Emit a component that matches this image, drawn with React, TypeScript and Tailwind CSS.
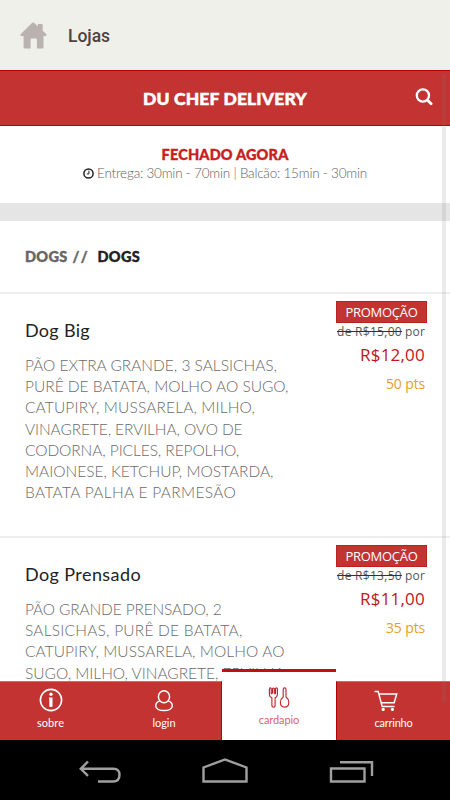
import { useLayoutEffect, useRef, useState } from "react";

/* One line of text, tracked so that it fills the given width. */
function Line({ text, width, className = "" }: { text: string; width: number; className?: string }) {
  const ref = useRef<HTMLSpanElement>(null);
  const [spacing, setSpacing] = useState(0);
  useLayoutEffect(() => {
    const el = ref.current;
    if (!el) return;
    el.style.letterSpacing = "0px";
    const natural = el.getBoundingClientRect().width;
    const next = (width - natural) / text.length;
    el.style.letterSpacing = next + "px";
    setSpacing(next);
  }, [text, width]);
  return (
    <span ref={ref} className={"inline-block whitespace-pre " + className} style={{ letterSpacing: spacing + "px" }}>
      {text}
    </span>
  );
}

type Row = [string, number];

const items: { name: Row; lines: Row[]; old: string; price: string; points: string }[] = [
  {
    name: ["Dog Big", 65],
    lines: [
      ["PÃO EXTRA GRANDE, 3 SALSICHAS,", 252],
      ["PURÊ DE BATATA, MOLHO AO SUGO,", 263.5],
      ["CATUPIRY, MUSSARELA, MILHO,", 230],
      ["VINAGRETE, ERVILHA, OVO DE", 217.5],
      ["CODORNA, PICLES, REPOLHO,", 214],
      ["MAIONESE, KETCHUP, MOSTARDA,", 248.5],
      ["BATATA PALHA E PARMESÃO", 211],
    ],
    old: "de R$15,00",
    price: "R$12,00",
    points: "50 pts",
  },
  {
    name: ["Dog Prensado", 116],
    lines: [
      ["PÃO GRANDE PRENSADO, 2", 196.5],
      ["SALSICHAS, PURÊ DE BATATA,", 217.5],
      ["CATUPIRY, MUSSARELA, MOLHO AO", 259.5],
      ["SUGO, MILHO, VINAGRETE, ERVILHA,", 263],
    ],
    old: "de R$13,50",
    price: "R$11,00",
    points: "35 pts",
  },
];

function Item({ item }: { item: (typeof items)[number] }) {
  return (
    <article className="flex h-[244px] shrink-0 justify-between border-t-2 border-[#eeeeee] pl-[25px] pr-[23px]">
      <div className="pt-[24px]">
        <h3 className="h-[24px] text-[18px] leading-[24px] text-[#222]">
          <Line text={item.name[0]} width={item.name[1]} />
        </h3>
        <div className="mt-[13px] text-[15.5px] font-light leading-[21.2px] text-[#6a6a6a]">
          {item.lines.map(([text, width]) => (
            <div key={text} className="h-[21.2px]">
              <Line text={text} width={width} />
            </div>
          ))}
        </div>
      </div>
      <div className="flex flex-col items-end pt-[7px] font-['Open_Sans',sans-serif]">
        <div className="flex h-[22px] w-[91px] items-center justify-center border border-[#be2020] bg-[#c33332] text-[13px] leading-[20px] text-white">
          <Line text="PROMOÇÃO" width={72} />
        </div>
        <div className="flex h-[17px] gap-[3px] pr-[2px] text-[12px] leading-[17px] text-[#555]">
          <Line text={item.old} width={65} className="line-through decoration-[#333]" />
          <Line text="por" width={20} />
        </div>
        <div className="mt-[3px] h-[24px] pr-[2px] text-[17px] leading-[24px] text-[#bd1720]">
          <Line text={item.price} width={65} />
        </div>
        <div className="mt-[8px] h-[18px] pr-[2px] text-[14px] leading-[18px] text-[#e5a02b]">
          <Line text={item.points} width={39} />
        </div>
      </div>
    </article>
  );
}

function HomeIcon() {
  return (
    <svg className="h-[27px] w-[27px] text-[#b9b2b0]" viewBox="0 0 27 27" fill="currentColor">
      <path d="M12 .9q1.1-1 2.2 0l3.6 3.3V2.8q0-.9.9-.9h3.1q.9 0 .9.9v5.9l3.5 3.3q1.1 1.6-.8 1.9h-1.9v11.3q0 1.3-1.3 1.3h-5.3v-8.8q0-1.1-1.1-1.1h-4.1q-1.1 0-1.1 1.1v8.8H4.9q-1.3 0-1.3-1.3V13.9H1.5q-2-.4-.7-2z" />
    </svg>
  );
}

function SearchIcon() {
  return (
    <svg className="h-[18px] w-[18px]" viewBox="0 0 18 18" fill="none" stroke="currentColor">
      <circle cx="7.9" cy="7.5" r="6.1" strokeWidth="2.3" />
      <path d="m12.4 12 3.7 3.7" strokeWidth="2.8" strokeLinecap="round" />
    </svg>
  );
}

function ClockIcon() {
  return (
    <svg className="h-[11px] w-[11px] text-[#222]" viewBox="0 0 11 11" fill="none" stroke="currentColor">
      <circle cx="5.5" cy="5.5" r="4.6" strokeWidth="1.5" />
      <path d="M5.9 2.7v3.2H3.7" strokeWidth="1" />
    </svg>
  );
}

function InfoIcon() {
  return (
    <svg className="h-[24px] w-[24px]" viewBox="0 0 24 24" fill="none" stroke="currentColor">
      <circle cx="12" cy="12" r="10.6" strokeWidth="1.6" />
      <circle cx="12" cy="6.3" r="1.7" fill="currentColor" stroke="none" />
      <path d="M10 9.5h3.5v8.8q0 .8-1.6.8t-1.6-.8v-7.6H10z" fill="currentColor" stroke="none" />
    </svg>
  );
}

function UserIcon() {
  return (
    <svg className="h-[24px] w-[24px]" viewBox="0 0 24 24" fill="none" stroke="currentColor" strokeWidth="1.5">
      <ellipse cx="12" cy="7.8" rx="5.6" ry="6" />
      <path d="M7.7 11.9c-2.4 1-4 2.700-4 4.800 0 3.200 3.800 4.900 8.300 4.900s8.300-1.700 8.300-4.900c0-2.100-1.600-3.800-4-4.800" />
    </svg>
  );
}

function CutleryIcon() {
  return (
    <svg className="h-[22px] w-[22px]" viewBox="0 0 22 22" fill="none" stroke="#c4272b" strokeWidth="1.15" strokeLinejoin="round">
      <path d="M1.4 1.5q1.1-1.2 1.800 0v5.100h1.100M4.500 6.600V1.500q.9-1 1.800 0v5.100M6.300 6.600h1.200V1.500q1-1.200 1.900 0v5.900q0 2.300-2.300 3.400v7.700q0 1.700-1.600 1.700t-1.600-1.700v-7.700Q1.400 9.700 1.400 7.400V1.500" />
      <path d="M15.200 10V2.500q0-1.600 1.400-1.600T18 2.500V10q2.800 2 2.800 5.200 0 4.900-4.200 4.900t-4.200-4.900q0-3.200 2.800-5.200z" />
    </svg>
  );
}

function CartIcon() {
  return (
    <svg className="h-[22px] w-[24px]" viewBox="0 0 24 22" fill="none" stroke="currentColor" strokeWidth="1.5">
      <path d="M.6 1.600h3.600l4 15h12.300M5 4h17.700l-2.500 8.700H7.200" />
      <circle cx="9.200" cy="19.400" r="1.600" fill="currentColor" stroke="none" />
      <circle cx="18.400" cy="19.400" r="1.600" fill="currentColor" stroke="none" />
    </svg>
  );
}

export default function App() {
  return (
    <div className="relative flex h-[800px] w-[450px] flex-col overflow-hidden bg-white font-[Lato,sans-serif]">
      <header className="flex h-[70px] shrink-0 items-center gap-[21px] bg-[#eff0ea] pl-[20px] font-[Roboto,sans-serif] text-[17.5px] font-medium text-[#4c4341]">
        <HomeIcon />
        <Line text="Lojas" width={42} className="mt-[2px] leading-[22px]" />
      </header>

      <div className="grid h-[56px] shrink-0 grid-cols-[1fr_auto_1fr] items-center border-y border-[#b80000] bg-[#c33332] text-white">
        <span />
        <Line text="DU CHEF DELIVERY" width={164} className="pt-px text-[17.5px] font-black leading-[24px] [-webkit-text-stroke:0.5px]" />
        <div className="flex justify-end pb-[3px] pr-[17px]">
          <SearchIcon />
        </div>
      </div>

      <section className="flex h-[77px] shrink-0 flex-col items-center pt-[20px]">
        <Line text="FECHADO AGORA" width={127} className="h-[18px] text-[14.5px] font-black leading-[18px] text-[#c81e22] [-webkit-text-stroke:0.4px]" />
        <div className="flex h-[18px] items-center gap-[3px] text-[13.5px] leading-[18px] text-[#606060]">
          <ClockIcon />
          <Line text="Entrega: 30min - 70min | Balcão: 15min - 30min" width={270} className="font-light" />
        </div>
      </section>

      <div className="h-[18px] shrink-0 bg-[#e5e5e5]" />

      <h2 className="flex h-[71px] shrink-0 items-center pl-[25px] text-[14.5px] font-black text-[#666] [-webkit-text-stroke:0.4px]">
        <Line text="DOGS" width={42.5} />
        <Line text="//" width={25} className="pl-[5px]" />
        <Line text="DOGS" width={42.5} className="ml-[5px] text-[#222]" />
      </h2>

      <main className="flex min-h-0 flex-1 flex-col overflow-hidden">
        {items.map((item) => (
          <Item key={item.name[0]} item={item} />
        ))}
      </main>

      <nav className="relative flex h-[59px] shrink-0 items-end text-[11px] leading-[14px] text-white">
        <div className="flex h-[59px] w-[111px] flex-col items-center border-t border-[#cf6a66] bg-[#c33332] pr-[10px] pt-[6px]">
          <InfoIcon />
          <Line text="sobre" width={27} className="mt-[4px]" />
        </div>
        <div className="flex h-[59px] w-[111px] flex-col items-center border-r border-t border-r-[#b80000] border-t-[#cf6a66] bg-[#c33332] pr-[4px] pt-[7px]">
          <UserIcon />
          <Line text="login" width={23} className="mt-[3px]" />
        </div>
        <div className="flex h-[71px] w-[114px] flex-col items-center border-t-[3px] border-[#c40d12] bg-white pt-[15px] text-[#d96564]">
          <CutleryIcon />
          <Line text="cardapio" width={40.5} className="mt-[4px]" />
        </div>
        <div className="flex h-[59px] w-[114px] flex-col items-center border-l border-t border-l-[#b80000] border-t-[#cf6a66] bg-[#c33332] pt-[8px]">
          <div className="pr-[16px]">
            <CartIcon />
          </div>
          <Line text="carrinho" width={38} className="mt-[4px]" />
        </div>
      </nav>

      <footer className="flex h-[60px] shrink-0 bg-black text-[#a0a0a0]">
        <svg className="h-[60px] w-[450px]" viewBox="0 0 450 60" fill="none" stroke="currentColor" strokeWidth="2.4">
          <path d="M98 41.5h15q6.500 0 6.500-6.500t-6.500-6.200H80.500M88 21.500l-7.200 7.300 7.200 7" />
          <path d="M203.500 41.500V27.500l21.500-8 21.500 8v14z" />
          <path d="M331 28.500h33.500V41.500H331zM340 22.300h32V36" />
        </svg>
      </footer>

      <div className="absolute right-[4px] top-[74px] h-[629px] w-[4px] bg-[#777]/15" />
    </div>
  );
}
